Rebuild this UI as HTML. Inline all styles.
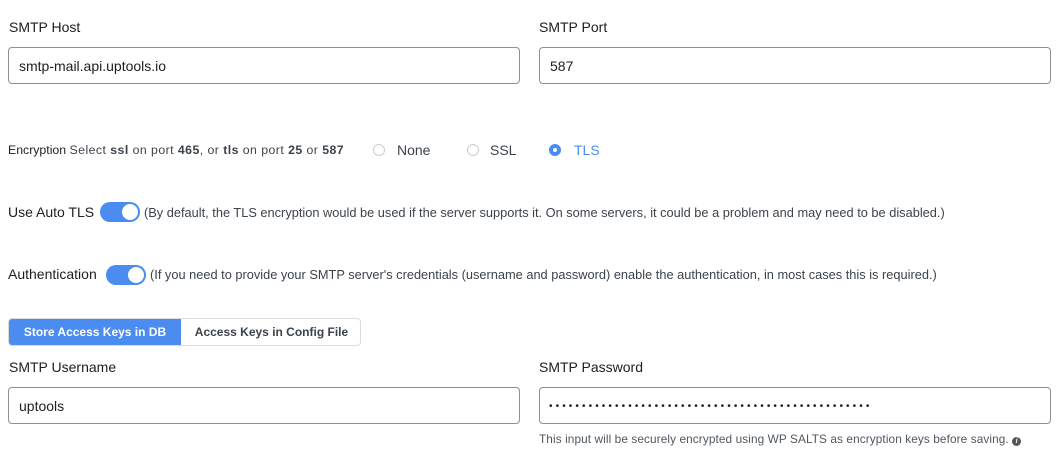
<!DOCTYPE html>
<html><head><style>
body{margin:0;width:1064px;height:463px;background:#fff;font-family:"Liberation Sans",sans-serif;color:#1d2327;position:relative;overflow:hidden}
.a{position:absolute;white-space:nowrap}
.lbl{font-size:14px;color:#1e1e1e}
.inp{position:absolute;height:37px;border:1px solid #8c8f94;border-radius:4px;box-sizing:border-box;font-size:14px;line-height:37px;padding-left:10px;color:#1e1e1e}
.radio{position:absolute;width:12px;height:12px;border:1px solid #c9ccd0;border-radius:50%;box-sizing:border-box}
.tog{position:absolute;width:40px;height:20px;border-radius:10px;background:#4a8cf0}
.tog:after{content:"";position:absolute;right:2px;top:2px;width:16px;height:16px;border-radius:50%;background:#fff}
.sm{font-size:12.8px;color:#3c434a}
</style></head><body>
<div class="a lbl" style="left:9px;top:19px">SMTP Host</div>
<div class="a lbl" style="left:539px;top:19px">SMTP Port</div>
<div class="inp" style="left:8px;top:47px;width:512px">smtp-mail.api.uptools.io</div>
<div class="inp" style="left:539px;top:47px;width:512px">587</div>

<div class="a" style="left:8px;top:143px;font-size:12.3px;color:#1e1e1e">Encryption <span style="font-size:12.3px;color:#3c434a;letter-spacing:0.45px">Select <b>ssl</b> on port <b>465</b>, or <b>tls</b> on port <b>25</b> or <b>587</b></span></div>
<div class="radio" style="left:373px;top:144px"></div>
<div class="a lbl" style="left:397px;top:142px;color:#3c434a">None</div>
<div class="radio" style="left:467px;top:144px"></div>
<div class="a lbl" style="left:490px;top:142px;color:#3c434a">SSL</div>
<div class="radio" style="left:549px;top:144px;border:4px solid #4a8cf0"></div>
<div class="a lbl" style="left:574px;top:142px;color:#4a8cf0">TLS</div>

<div class="a lbl" style="left:8px;top:204px">Use Auto TLS</div>
<div class="tog" style="left:100px;top:202px"></div>
<div class="a sm" style="left:144px;top:205px">(By default, the TLS encryption would be used if the server supports it. On some servers, it could be a problem and may need to be disabled.)</div>

<div class="a lbl" style="left:8px;top:266px">Authentication</div>
<div class="tog" style="left:106px;top:265px"></div>
<div class="a sm" style="left:150px;top:267px">(If you need to provide your SMTP server's credentials (username and password) enable the authentication, in most cases this is required.)</div>

<div class="a" style="left:8px;top:318px;width:353px;height:28px;border:1px solid #dcdcde;border-radius:4px;box-sizing:border-box;overflow:hidden;font-size:12px;font-weight:bold">
<div style="position:absolute;left:0;top:0;width:172px;height:28px;background:#4a8cf0;color:#fff;line-height:26px;text-align:center">Store Access Keys in DB</div>
<div style="position:absolute;left:172px;top:0;width:181px;height:28px;color:#3c434a;line-height:26px;text-align:center">Access Keys in Config File</div>
</div>

<div class="a lbl" style="left:9px;top:359px">SMTP Username</div>
<div class="a lbl" style="left:539px;top:359px">SMTP Password</div>
<div class="inp" style="left:8px;top:387px;width:512px">uptools</div>
<div class="inp" style="left:539px;top:387px;width:512px;font-size:10px;letter-spacing:3.1px;padding-left:9px">•••••••••••••••••••••••••••••••••••••••••••••••••</div>
<div class="a" style="left:539px;top:432px;font-size:11.8px;color:#50575e;letter-spacing:0.1px">This input will be securely encrypted using WP SALTS as encryption keys before saving. <span style="display:inline-block;width:9px;height:9px;border-radius:50%;background:#555;color:#fff;font-size:7px;line-height:9px;text-align:center;font-style:italic;font-weight:bold;vertical-align:0px;letter-spacing:0">i</span></div>
</body></html>
